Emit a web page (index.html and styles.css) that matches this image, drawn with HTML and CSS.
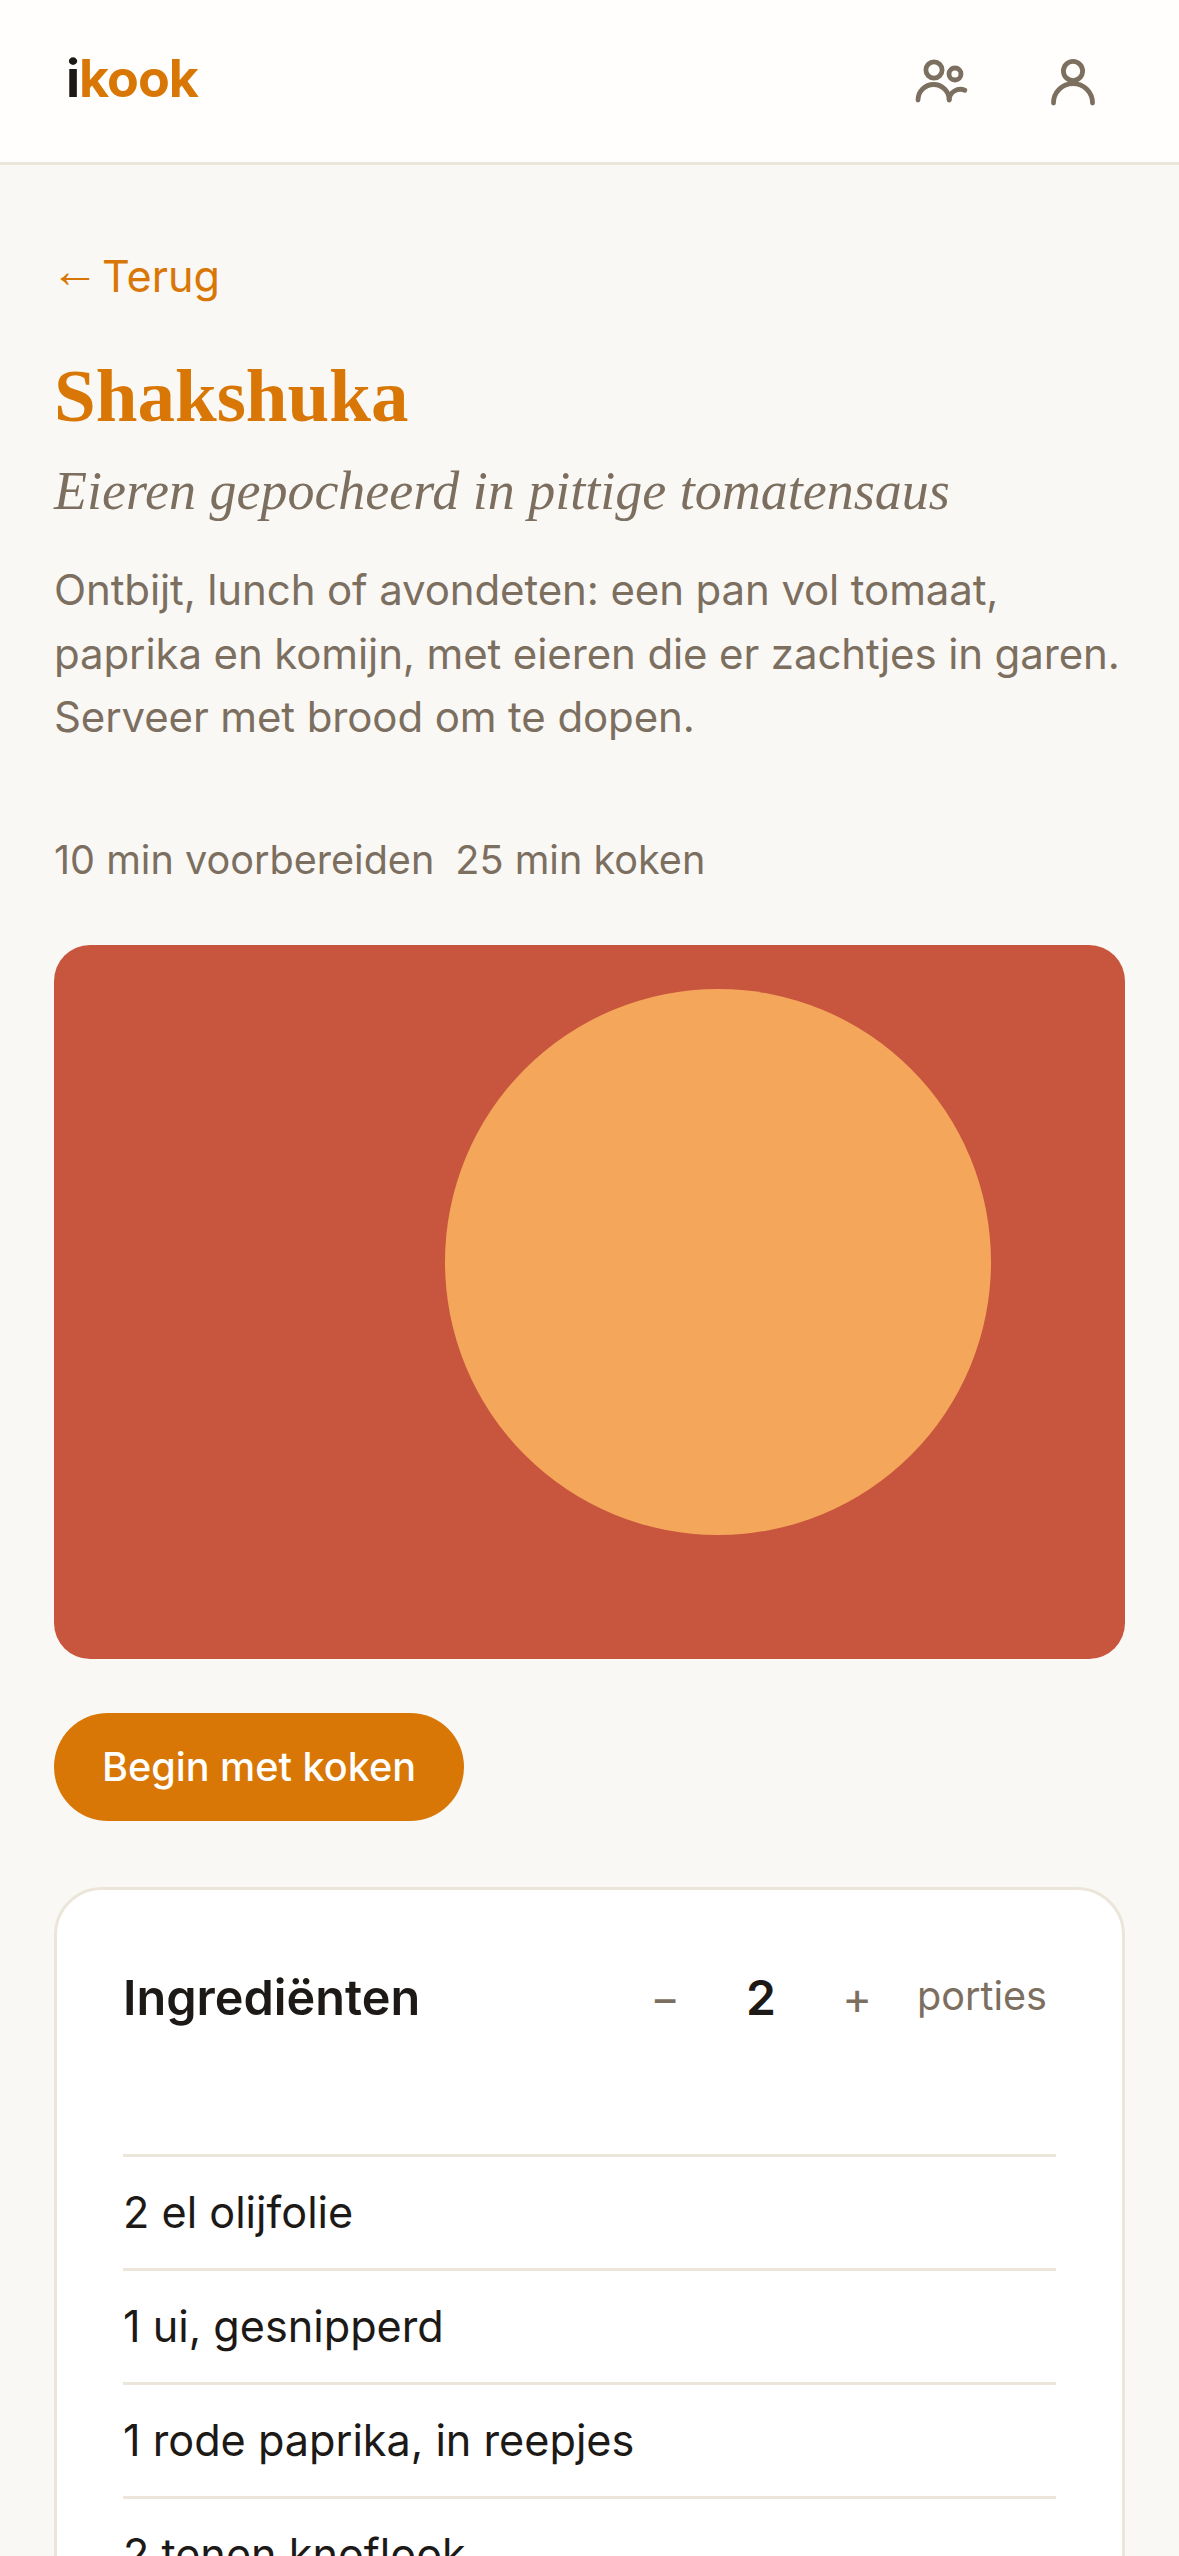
FILE: index.html
```html
<!DOCTYPE html>
<html lang="nl">
<head>
  <meta charset="UTF-8" />
  <meta name="viewport" content="width=device-width, initial-scale=1.0">
  <title>Shakshuka - ikook</title>
  <link rel="stylesheet" href="styles.css">
</head>
<body>

  <!-- Header -->
  <header class="top-bar">
    <a class="logo" href="#"><span class="logo-i">i</span>kook</a>
    <nav class="top-icons">
      <a class="icon-link" href="#" aria-label="Groep">
        <svg viewBox="0 0 24 24" class="icon">
          <circle cx="9.33" cy="7.67" r="2.7"/>
          <circle cx="16.33" cy="9" r="2"/>
          <path d="M4 17.7a5.2 5.2 0 0 1 10.4 0"/>
          <path d="M14.4 17.6c0-2.6 2.9-4.2 5.2-3.2"/>
        </svg>
      </a>
      <a class="icon-link" href="#" aria-label="Profiel">
        <svg viewBox="0 0 24 24" class="icon">
          <circle cx="12" cy="8" r="3.2"/>
          <path d="M5.5 18.7a6.5 6.5 0 0 1 13 0"/>
        </svg>
      </a>
    </nav>
  </header>

  <main class="page">
    <a class="back-link" href="#"><span class="back-arrow">←</span><span>Terug</span></a>

    <h1 class="recipe-title">Shakshuka</h1>
    <p class="recipe-sub">Eieren gepocheerd in pittige tomatensaus</p>
    <p class="recipe-desc">Ontbijt, lunch of avondeten: een pan vol tomaat, paprika en komijn, met eieren die er zachtjes in garen. Serveer met brood om te dopen.</p>

    <div class="recipe-meta">
      <span>10 min voorbereiden</span>
      <span>25 min koken</span>
    </div>

    <!-- Recipe picture -->
    <svg class="recipe-img" viewBox="0 0 1071 714" role="img" aria-label="Shakshuka">
      <rect width="1071" height="714" fill="#c8553d"/>
      <circle cx="664" cy="317" r="273" fill="#f4a65b"/>
    </svg>

    <button class="start-btn">Begin met koken</button>

    <!-- Ingredients -->
    <section class="card">
      <div class="card-head">
        <h2 class="card-title">Ingrediënten</h2>
        <div class="stepper">
          <button class="step-btn">−</button>
          <span class="step-count">2</span>
          <button class="step-btn">+</button>
          <span class="step-label">porties</span>
        </div>
      </div>
      <ul class="ingredients">
        <li>2 el olijfolie</li>
        <li>1 ui, gesnipperd</li>
        <li>1 rode paprika, in reepjes</li>
        <li>2 tenen knoflook</li>
      </ul>
    </section>
  </main>

</body>
</html>
```

FILE: styles.css
```css
/* Basic Reset */
* {
  margin: 0;
  padding: 0;
  box-sizing: border-box;
}
html, body {
  height: 2556px;
  overflow: hidden;
}
body {
  background-color: #faf8f5;
  color: #1c1917;
  font-family: Inter, "Noto Sans", sans-serif;
  font-size: 42px;
}
a {
  text-decoration: none;
  color: inherit;
}
button {
  font-family: inherit;
  border: none;
  background: none;
}
/* Header */
.top-bar {
  height: 165px;
  background-color: #fffefc;
  border-bottom: 3px solid #ebe6d9;
  display: flex;
  justify-content: space-between;
  align-items: center;
  padding: 0 70px 0 66px;
}
.logo {
  font-size: 52px;
  font-weight: 700;
  letter-spacing: -1px;
  color: #d97706;
  margin-bottom: 6px;
}
.logo-i {
  color: #1c1917;
}
.top-icons {
  display: flex;
  gap: 59px;
  margin-top: 3px;
}
.icon-link {
  display: block;
  width: 72px;
  height: 72px;
}
.icon {
  display: block;
  width: 72px;
  height: 72px;
  fill: none;
  stroke: #7c6f5f;
  stroke-width: 1.6;
  stroke-linecap: round;
}
/* Page */
.page {
  padding: 84px 54px 0;
}
.back-link {
  display: flex;
  align-items: center;
  gap: 3px;
  color: #d97706;
  font-size: 43.2px;
  line-height: 54px;
}
.back-arrow {
  font-family: "Liberation Sans", sans-serif;
  font-size: 48px;
  line-height: 44px;
  padding-bottom: 10px;
  margin-left: -3px;
}
.recipe-title {
  font-family: "Liberation Serif", serif;
  font-size: 75px;
  line-height: 90px;
  font-weight: 700;
  color: #d97706;
  margin-top: 48px;
}
.recipe-sub {
  font-family: "Liberation Serif", serif;
  font-style: italic;
  font-size: 54px;
  line-height: 66px;
  color: #7c6f5f;
  margin-top: 17px;
}
.recipe-desc {
  font-size: 42px;
  line-height: 63.5px;
  letter-spacing: -0.12px;
  color: #7c6f5f;
  margin-top: 34px;
}
.recipe-meta {
  display: flex;
  gap: 21px;
  font-size: 39.6px;
  line-height: 54px;
  color: #7c6f5f;
  margin-top: 84px;
}
.recipe-img {
  display: block;
  width: 100%;
  height: 714px;
  border-radius: 36px;
  margin-top: 58px;
}
.start-btn {
  display: block;
  height: 108px;
  padding: 0 48px;
  border-radius: 54px;
  background-color: #d97706;
  color: #fff;
  font-size: 39.6px;
  font-weight: 500;
  margin-top: 54px;
}
/* Ingredients card */
.card {
  background-color: #fff;
  border: 3px solid #ebe6d9;
  border-radius: 48px;
  padding: 66px;
  margin-top: 66px;
}
.card-head {
  display: flex;
  justify-content: space-between;
  align-items: center;
  height: 78px;
  margin-bottom: 120px;
}
.card-title {
  font-size: 48.6px;
  font-weight: 600;
  padding-top: 6px;
}
.stepper {
  display: flex;
  align-items: center;
  padding-right: 9px;
}
.step-btn {
  width: 72px;
  font-size: 45px;
  color: #7c6f5f;
  padding-top: 6px;
}
.step-count {
  width: 120px;
  text-align: center;
  font-size: 48px;
  font-weight: 600;
  padding-top: 6px;
}
.step-label {
  margin-left: 24px;
  padding-top: 3px;
  font-size: 39.6px;
  color: #7c6f5f;
}
.ingredients {
  list-style: none;
}
.ingredients li {
  border-top: 3px solid #ebe6d9;
  height: 114px;
  line-height: 111px;
  font-size: 43.2px;
}
```
